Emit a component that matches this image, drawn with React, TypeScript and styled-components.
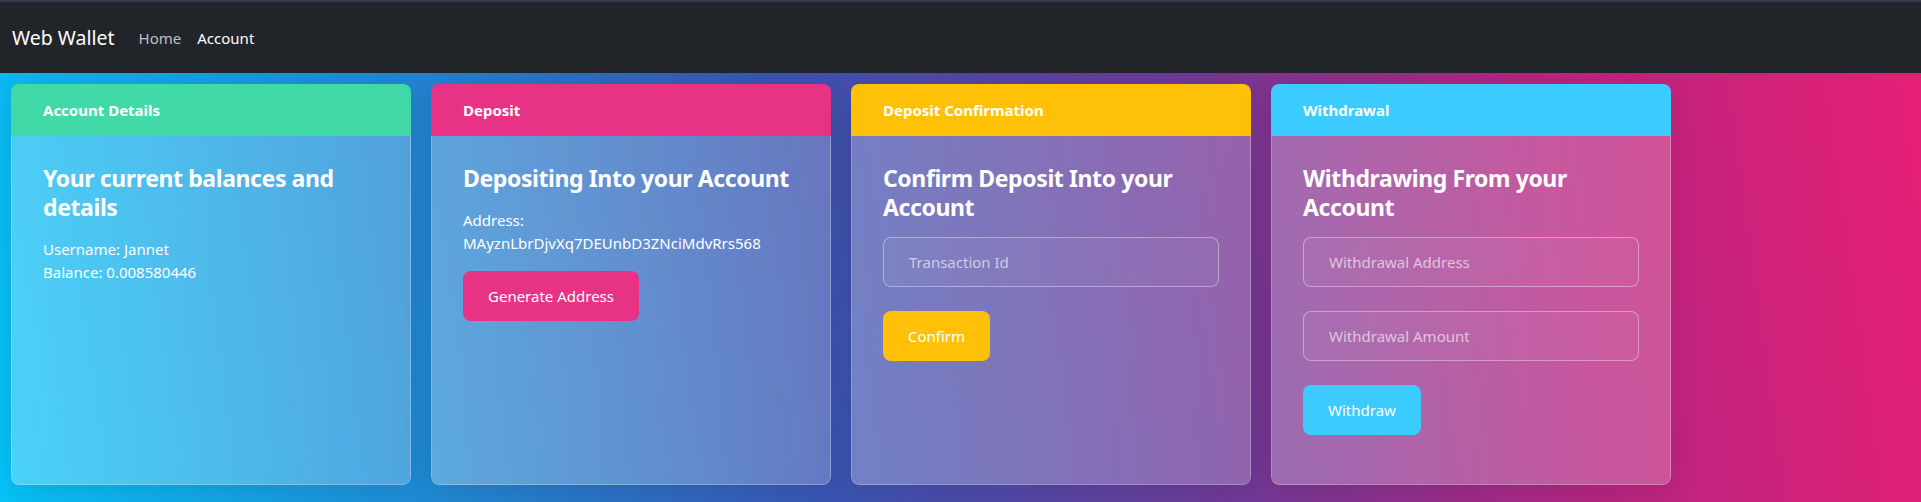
import React from "react";
import styled, { createGlobalStyle } from "styled-components";

const GlobalStyle = createGlobalStyle`
  html, body { margin: 0; padding: 0; }
  body {
    font-family: "Noto Sans", "Open Sans", sans-serif;
    background: #212529;
    color: #fff;
  }
  * { box-sizing: border-box; }
`;

const Navbar = styled.nav`
  height: 73px;
  background: #212529;
  border-top: 2px solid #37384b;
  display: flex;
  align-items: center;
  padding: 0 12px 0 12px;
`;

const Brand = styled.a`
  font-size: 19.5px;
  color: #fff;
  margin-right: 16px;
  text-decoration: none;
`;

const NavLink = styled.a<{ $active?: boolean }>`
  font-size: 15px;
  padding: 0 8px;
  color: ${(p) => (p.$active ? "#ffffff" : "rgba(255,255,255,0.72)")};
  text-decoration: none;
`;

const Main = styled.main`
  height: 429px;
  padding: 11px 11px 17px;
  display: flex;
  gap: 20px;
  align-items: stretch;
  background: linear-gradient(
    82deg,
    #06c3f8 0%,
    #1e8fd8 20%,
    #3a55b2 42%,
    #6e3a98 62%,
    #b42682 80%,
    #e61e74 100%
  );
`;

const Card = styled.section`
  width: 400px;
  flex: 0 0 400px;
  display: flex;
  flex-direction: column;
  border-radius: 8px;
  overflow: hidden;
  box-shadow: 0 4px 30px rgba(0, 0, 0, 0.12);
`;

const CardHeader = styled.header<{ $color: string }>`
  height: 52px;
  flex: 0 0 52px;
  background: ${(p) => p.$color};
  padding: 0 32px;
  display: flex;
  align-items: center;
  font-size: 15px;
  font-weight: 700;
  color: #fff;
`;

const CardBody = styled.div`
  flex: 1;
  padding: 28px 31px 20px;
  background: linear-gradient(
    90deg,
    rgba(255, 255, 255, 0.27) 0%,
    rgba(255, 255, 255, 0.22) 100%
  );
  border: 1px solid rgba(255, 255, 255, 0.25);
  border-top: none;
  border-radius: 0 0 8px 8px;
  display: flex;
  flex-direction: column;
  align-items: flex-start;
`;

const Title = styled.h4`
  margin: 0 0 16px;
  font-size: 23px;
  line-height: 29px;
  font-weight: 700;
  letter-spacing: -0.4px;
  color: #fff;
`;

const Text = styled.p`
  margin: 0;
  font-size: 15px;
  line-height: 23px;
  color: #fff;
`;

const Button = styled.button<{ $color: string }>`
  height: 50px;
  padding: 0 25px;
  border: none;
  border-radius: 8px;
  background: ${(p) => p.$color};
  color: #fff;
  font-family: inherit;
  font-size: 15px;
  cursor: pointer;
`;

const Form = styled.div`
  display: flex;
  flex-direction: column;
  align-items: flex-start;
  gap: 24px;
  width: 100%;
  margin-top: -1px;
`;

const ButtonRow = styled.div`
  margin-top: 16px;
`;

const Input = styled.input`
  width: 100%;
  height: 50px;
  padding: 0 25px;
  border: 1px solid rgba(255, 255, 255, 0.38);
  border-radius: 8px;
  background: rgba(255, 255, 255, 0.04);
  color: #fff;
  font-family: inherit;
  font-size: 15px;
  outline: none;
  &::placeholder {
    color: rgba(255, 255, 255, 0.62);
  }
`;

const GREEN = "#42d9a8";
const PINK = "#e83283";
const YELLOW = "#ffc107";
const CYAN = "#3bcbfe";

export default function App() {
  return (
    <>
      <GlobalStyle />
      <Navbar>
        <Brand>Web Wallet</Brand>
        <NavLink>Home</NavLink>
        <NavLink $active>Account</NavLink>
      </Navbar>
      <Main>
        <Card>
          <CardHeader $color={GREEN}>Account Details</CardHeader>
          <CardBody>
            <Title>Your current balances and details</Title>
            <Text>Username: Jannet</Text>
            <Text>Balance: 0.008580446</Text>
          </CardBody>
        </Card>
        <Card>
          <CardHeader $color={PINK}>Deposit</CardHeader>
          <CardBody>
            <Title>Depositing Into your Account</Title>
            <Text>Address:</Text>
            <Text>MAyznLbrDjvXq7DEUnbD3ZNciMdvRrs568</Text>
            <ButtonRow>
              <Button $color={PINK}>Generate Address</Button>
            </ButtonRow>
          </CardBody>
        </Card>
        <Card>
          <CardHeader $color={YELLOW}>Deposit Confirmation</CardHeader>
          <CardBody>
            <Title>Confirm Deposit Into your Account</Title>
            <Form>
              <Input placeholder="Transaction Id" />
              <Button $color={YELLOW}>Confirm</Button>
            </Form>
          </CardBody>
        </Card>
        <Card>
          <CardHeader $color={CYAN}>Withdrawal</CardHeader>
          <CardBody>
            <Title>Withdrawing From your Account</Title>
            <Form>
              <Input placeholder="Withdrawal Address" />
              <Input placeholder="Withdrawal Amount" />
              <Button $color={CYAN}>Withdraw</Button>
            </Form>
          </CardBody>
        </Card>
      </Main>
    </>
  );
}
